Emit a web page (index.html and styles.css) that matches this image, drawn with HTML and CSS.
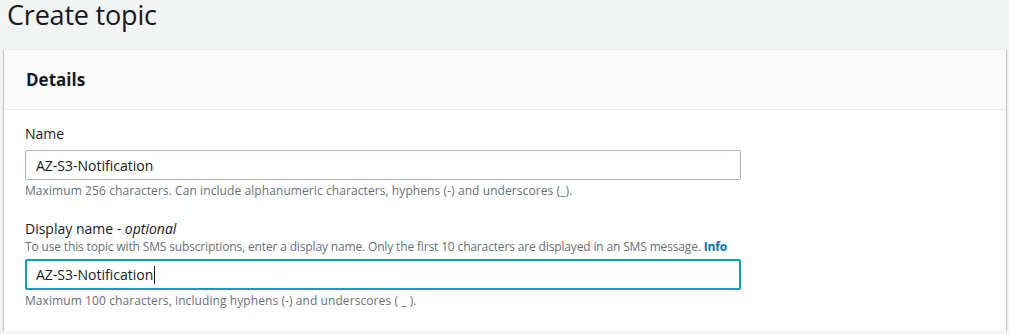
FILE: index.html
```html
<!DOCTYPE html>
<html lang="en">
<head>
    <meta charset="UTF-8">
    <meta name="viewport" content="width=device-width, initial-scale=1.0">
    <title>Create topic</title>
    <link rel="stylesheet" href="styles.css">
</head>
<body>
    <h1 class="page-title">Create topic</h1>

    <section class="panel">
        <header class="panel-header">
            <h2>Details</h2>
        </header>
        <div class="panel-body">
            <div class="field">
                <label class="field-label">Name</label>
                <div class="field-input">AZ-S3-Notification</div>
                <p class="field-hint">Maximum 256 characters. Can include alphanumeric characters, hyphens (-) and underscores (_).</p>
            </div>

            <div class="field">
                <label class="field-label">Display name - <i>optional</i></label>
                <p class="field-desc">To use this topic with SMS subscriptions, enter a display name. Only the first 10 characters are displayed in an SMS message. <a href="#" class="info-link">Info</a></p>
                <div class="field-input focused">AZ-S3-Notification<span class="caret"></span></div>
                <p class="field-hint">Maximum 100 characters, including hyphens (-) and underscores ( _ ).</p>
            </div>
        </div>
    </section>
</body>
</html>
```

FILE: styles.css
```css
body {
    font-family: 'Open Sans', 'Noto Sans', sans-serif;
    margin: 0;
    padding: 0 3px 0 4px;
    background: #f2f3f3;
    color: #16191f;
}

.page-title {
    font-size: 27px;
    font-weight: 400;
    letter-spacing: -0.2px;
    line-height: 29px;
    margin: 0;
    padding-left: 3px;
}

.panel {
    margin-top: 20px;
    background: #fff;
    border-top: 1px solid #eaeded;
    box-shadow: 0 1px 1px 0 rgba(0, 28, 36, 0.3), 1px 1px 1px 0 rgba(0, 28, 36, 0.15), -1px 1px 1px 0 rgba(0, 28, 36, 0.15);
}

.panel-header {
    background: #fafafa;
    height: 59px;
    border-bottom: 1px solid #eaeded;
    display: flex;
    align-items: center;
    padding: 0 22px;
}

.panel-header h2 {
    margin: 0;
    font-size: 17px;
    font-weight: 700;
}

.panel-body {
    padding: 14px 21px 22px;
}

.field + .field {
    margin-top: 20px;
}

.field-label {
    display: block;
    font-size: 14px;
    line-height: 20px;
}

.field-desc {
    margin: 0 0 4px;
    font-size: 12px;
    line-height: 16px;
    letter-spacing: -0.15px;
    color: #687078;
}

.field-label + .field-input {
    margin-top: 6px;
}

.info-link {
    color: #0073bb;
    font-weight: 700;
    text-decoration: none;
}

.field-input {
    box-sizing: border-box;
    width: 716px;
    height: 30px;
    border: 1px solid #aab7b8;
    border-radius: 2px;
    padding: 0 10px;
    font-size: 14px;
    display: flex;
    align-items: center;
}

.field-input.focused {
    height: 31px;
    border: 2px solid #00a1c9;
    padding-left: 9px;
}

.caret {
    display: inline-block;
    width: 1px;
    height: 18px;
    background: #16191f;
    margin-left: 1px;
}

.field-hint {
    margin: 3px 0 0;
    font-size: 12px;
    line-height: 16px;
    letter-spacing: 0.08px;
    color: #687078;
}
```
